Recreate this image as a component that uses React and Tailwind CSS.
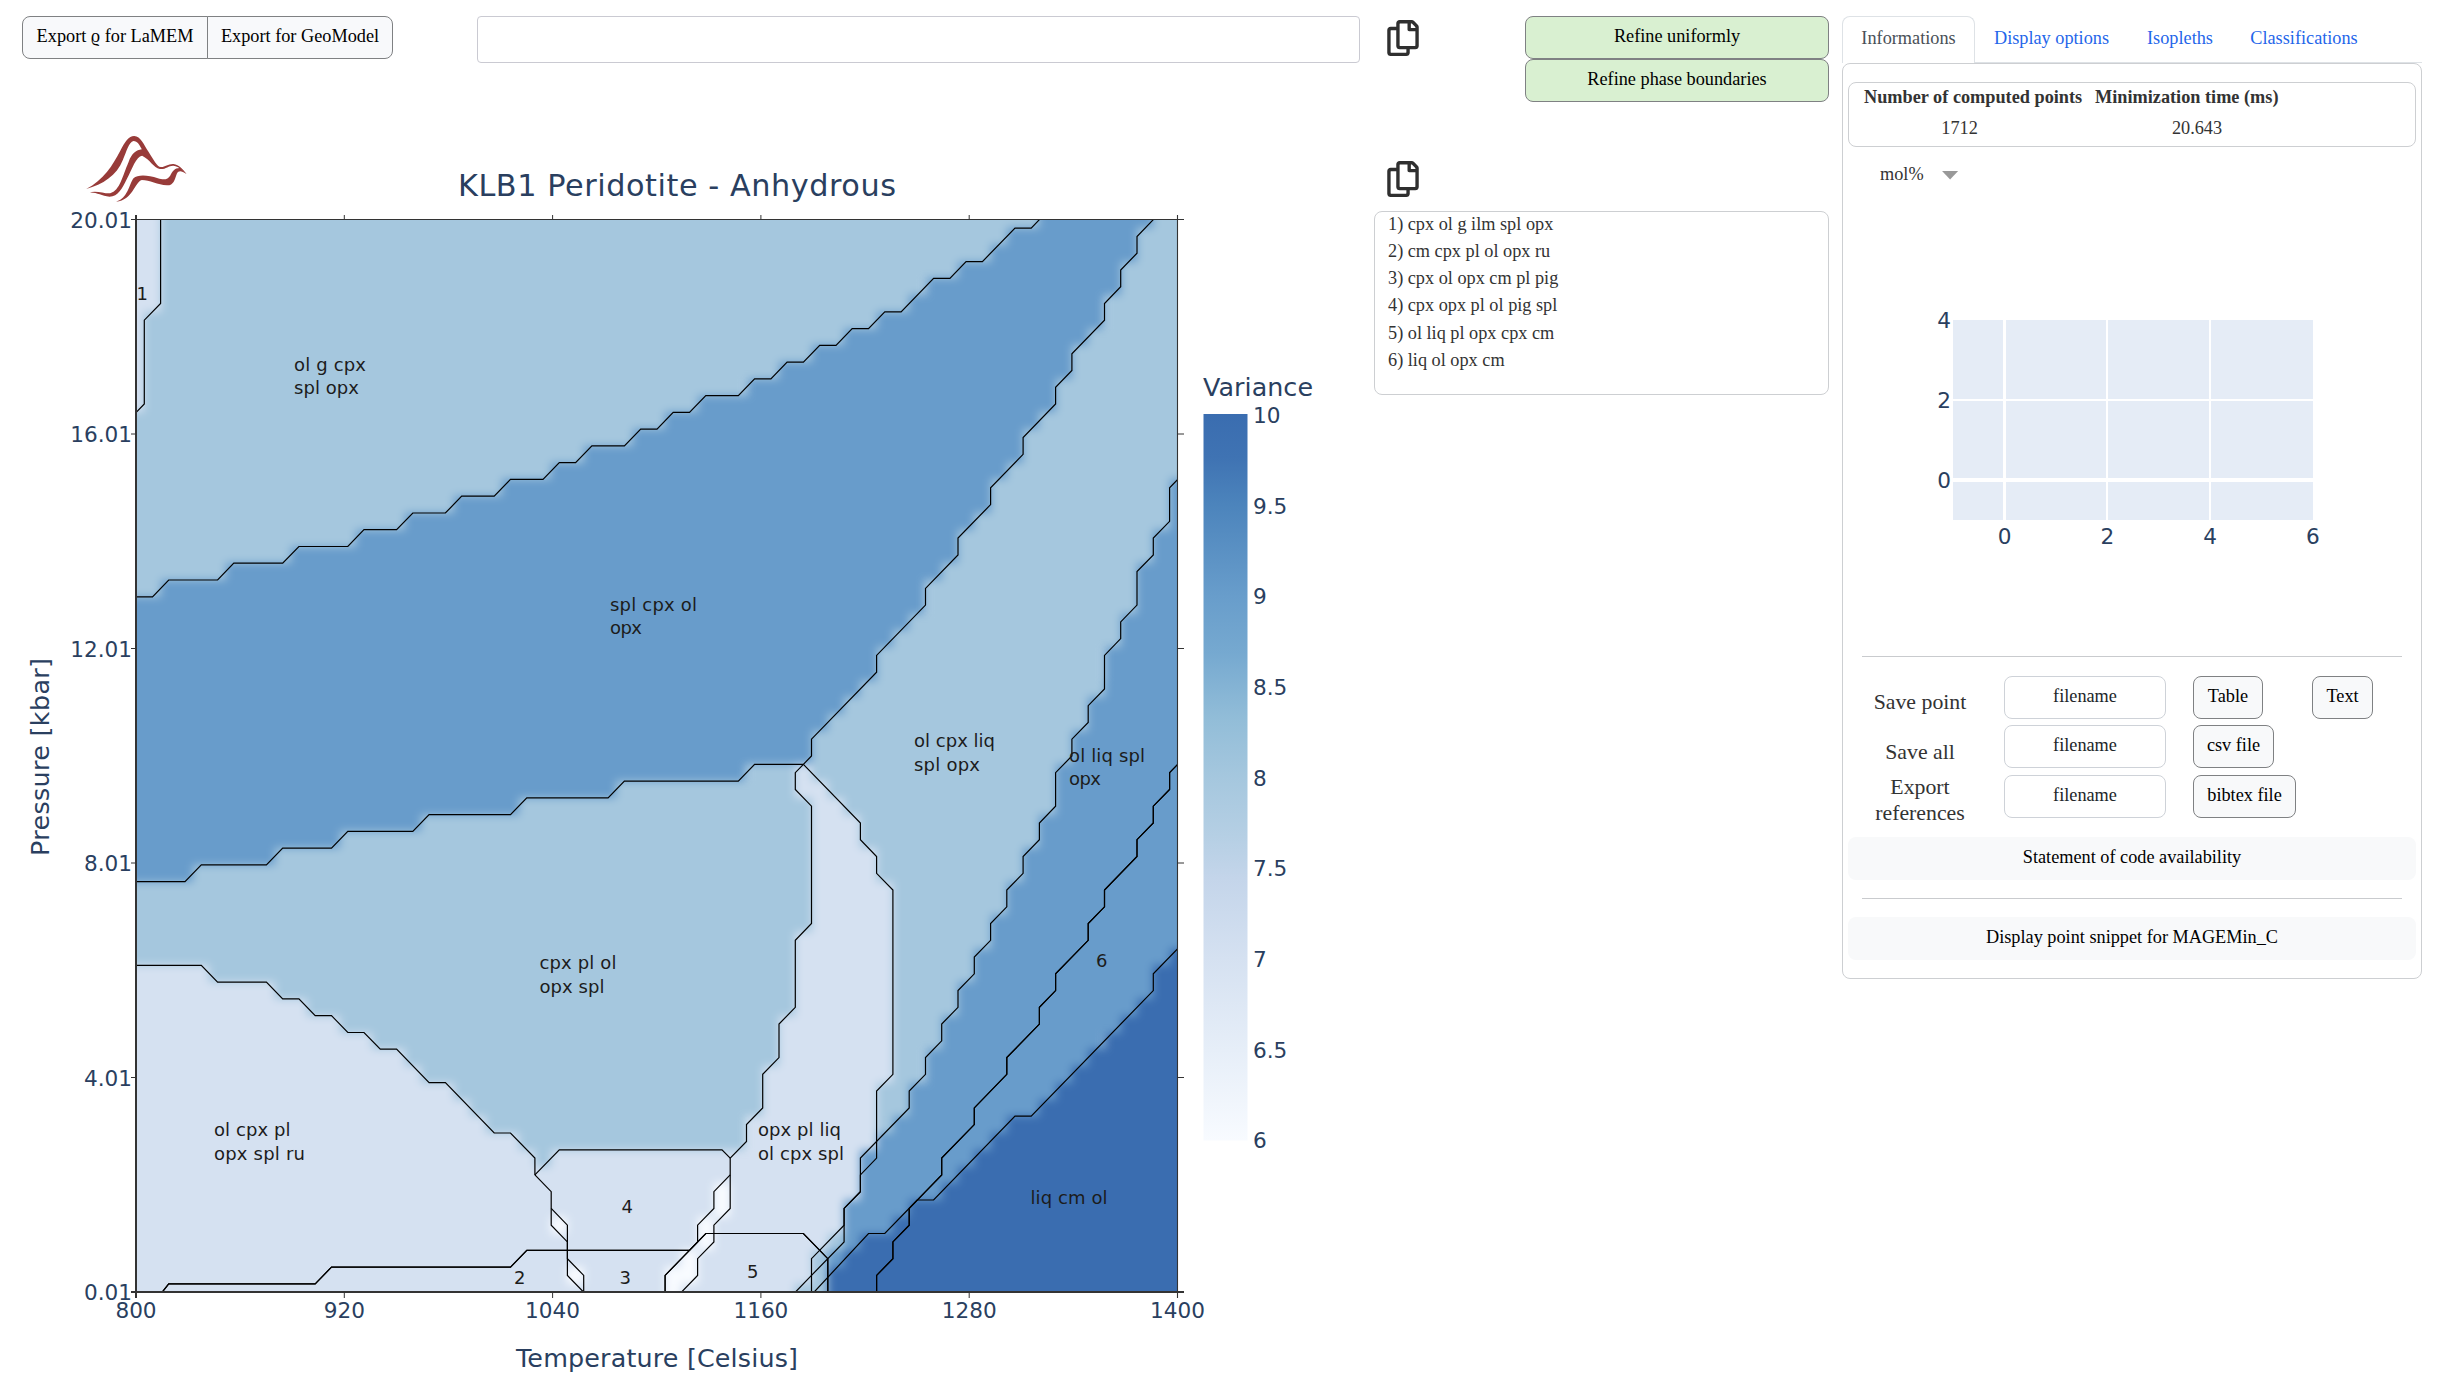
import React from "react";
import { FaRegCopy } from "react-icons/fa";

/* ---------- phase diagram geometry, on a 128 x 128 half-cell grid ---------- */
const X0 = 136.2;
const Y0 = 219.7;
const SX = 1041.5 / 128;
const SY = 1072.5 / 128;
const px = (u) => +(X0 + u * SX).toFixed(1);
const py = (v) => +(Y0 + v * SY).toFixed(1);

const cornerLeft = [[3, 0], [3, 10], [1, 12], [1, 22], [0, 23]];
const garnetOut = [
  [0, 45], [2, 45], [4, 43], [10, 43], [12, 41], [18, 41], [20, 39], [26, 39], [28, 37], [32, 37],
  [34, 35], [38, 35], [40, 33], [44, 33], [46, 31], [50, 31], [52, 29], [54, 29], [56, 27], [60, 27],
  [62, 25], [64, 25], [66, 23], [68, 23], [70, 21], [74, 21], [76, 19], [78, 19], [80, 17], [82, 17],
  [84, 15], [86, 15], [88, 13], [90, 13], [92, 11], [94, 11], [98, 7], [100, 7], [102, 5], [104, 5],
  [108, 1], [110, 1], [111, 0],
];
const solidusHigh = [
  [125, 0], [123, 2], [123, 4], [121, 6], [121, 8], [119, 10], [119, 12], [115, 16], [115, 18],
  [113, 20], [113, 22], [109, 26], [109, 28], [105, 32], [105, 34], [101, 38], [101, 40], [97, 44],
  [97, 46], [91, 52], [91, 54], [83, 62], [83, 64], [82, 65],
];
const solidusLow = [
  [82, 65], [81, 66], [81, 68], [83, 70], [83, 84], [81, 86], [81, 94], [79, 96], [79, 100], [77, 102],
  [77, 106], [75, 108], [75, 110], [73, 112],
];
const solidusTail = [[73, 112], [73, 118], [71, 120], [71, 122], [69, 124], [69, 126], [67, 128]];
const plagIn = [
  [0, 79], [6, 79], [8, 77], [16, 77], [18, 75], [24, 75], [26, 73], [34, 73], [36, 71], [46, 71],
  [48, 69], [58, 69], [60, 67], [74, 67], [76, 65], [82, 65],
];
const rutileIn = [
  [0, 89], [8, 89], [10, 91], [16, 91], [18, 93], [20, 93], [22, 95], [24, 95], [26, 97], [28, 97],
  [30, 99], [32, 99], [36, 103], [38, 103], [44, 109], [46, 109], [49, 112], [49, 114],
];
const rutileTail = [[49, 114], [51, 116], [51, 120], [53, 122], [53, 126], [55, 128]];
const pigeoniteLeft = [[51, 118], [53, 120], [53, 124], [55, 126], [55, 128]];
const pigeoniteTop = [[49, 114], [52, 111], [72, 111], [73, 112]];
const pigeoniteRight = [[73, 114], [71, 116], [71, 118], [69, 120], [69, 122], [68, 123]];
const field2 = [[3.2, 128], [4, 127], [22, 127], [24, 125], [46, 125], [48, 123], [68, 123]];
const field5 = [[65, 128], [65, 126], [70, 121], [82, 121], [85, 124], [85, 128]];
const plagOut = [
  [82, 65], [89, 72], [89, 74], [91, 76], [91, 78], [93, 80], [93, 102], [91, 104], [91, 112],
  [89, 114], [89, 116], [87, 118], [87, 122], [83, 126], [81, 128],
];
const cpxOut = [
  [128, 31], [127, 32], [127, 36], [125, 38], [125, 40], [123, 42], [123, 46], [121, 48], [121, 50],
  [119, 52], [119, 56], [117, 58], [117, 60], [115, 62], [115, 64], [113, 66], [113, 70], [111, 72],
  [111, 74], [109, 76], [109, 78], [107, 80], [107, 82], [105, 84], [105, 86], [103, 88], [103, 90],
  [101, 92], [101, 94], [99, 96], [99, 98], [97, 100], [97, 102], [95, 104], [95, 106], [89, 112],
  [89, 116], [87, 118], [87, 120], [83, 124], [83, 128],
];
const spinelOut = [
  [128, 65], [127, 66], [127, 68], [125, 70], [125, 72], [123, 74], [123, 76], [119, 80], [119, 82],
  [117, 84], [117, 86], [113, 90], [113, 92], [111, 94], [111, 96], [107, 100], [107, 102], [103, 106],
  [103, 108], [99, 112], [99, 114], [95, 118], [95, 120], [93, 122], [93, 124], [91, 126], [91, 128],
];
const opxOut = [[128, 87], [125, 90], [125, 92], [110, 107], [108, 107], [98, 117], [96, 117]];
const opxTail = [[96, 117], [92, 121], [90, 121], [83.3, 128]];

const rev = (a) => [...a].reverse();

/* painted in order, later fields win */
const fields = [
  [7, [[0, 0], ...cornerLeft]],
  [9, [...garnetOut, ...solidusHigh, ...rev(plagIn)]],
  [7, [...rutileIn, ...pigeoniteTop, ...rev(solidusLow), ...plagOut, [0, 128]]],
  [6, [[51, 118], [53, 120], [53, 122], [51, 120]]],
  [6, [[53, 124], [55, 126], [55, 128], [53, 126]]],
  [6, [...pigeoniteRight, [65, 126], [65, 128], ...rev(solidusTail)]],
  [9, [...cpxOut, [128, 128]]],
  [10, [...opxOut, ...opxTail, [128, 128]]],
  [8, [[83, 123], [85, 123], [85, 128], [83, 128]]],
  [8, [[85, 121], [87, 121], [87, 123], [85, 123]]],
].map(([k, pts]) => [
  k,
  pts.map(([a, b]) => [a === 0 ? -1 : a === 128 ? 129 : a, b === 0 ? -1 : b === 128 ? 129 : b]),
]);

const tone = { 6: "#f8fbff", 7: "#d5e1f1", 8: "#a5c7de", 9: "#689ccb", 10: "#3a6db0" };

function inside(pts, x, y) {
  let hit = false;
  for (let i = 0, j = pts.length - 1; i < pts.length; j = i++) {
    const [xi, yi] = pts[i];
    const [xj, yj] = pts[j];
    if (yi > y !== yj > y && x < ((xj - xi) * (y - yi)) / (yj - yi) + xi) hit = !hit;
  }
  return hit;
}

/* one run per stretch of equal variance in each row of cells */
const runs = [];
for (let v = 0; v <= 128; v += 2) {
  let last = null;
  for (let u = 0; u <= 128; u += 2) {
    let k = 8;
    for (const [val, pts] of fields) if (inside(pts, u, v)) k = val;
    if (last && last.k === k) last.u2 = u + 1;
    else {
      last = { k, u1: u === 0 ? -3 : u - 1, u2: u + 1, v };
      runs.push(last);
    }
  }
  last.u2 = 131;
}

const lines = [
  cornerLeft, garnetOut, solidusHigh, solidusLow, solidusTail, plagIn, rutileIn, rutileTail,
  pigeoniteLeft, pigeoniteTop, pigeoniteRight, field2, field5, plagOut, cpxOut, spinelOut, opxOut, opxTail,
];
const heavy = [field2, field5, spinelOut];
const toPoints = (a) => a.map(([u, v]) => `${px(u)},${py(v)}`).join(" ");

const labels = [
  [136.5, 299.5, "1"],
  [294, 371, "ol g cpx", 72], [294, 394, "spl opx", 65],
  [610, 611, "spl cpx ol", 87], [610, 634, "opx", 32],
  [914, 747, "ol cpx liq", 81], [914, 770.5, "spl opx", 66],
  [1069, 762, "ol liq spl", 76], [1069, 785, "opx", 32],
  [539.5, 969, "cpx pl ol", 77], [539.5, 992.5, "opx spl", 65],
  [214, 1135.5, "ol cpx pl", 76.5], [214, 1159.5, "opx spl ru", 91],
  [758, 1135.5, "opx pl liq", 83], [758, 1159.5, "ol cpx spl", 86],
  [1030.5, 1204.3, "liq cm ol", 77],
  [621.5, 1212.5, "4"], [514, 1283.5, "2"], [619.5, 1283.5, "3"], [747, 1277.5, "5"], [1096, 967, "6"],
];

const xTicks = ["800", "920", "1040", "1160", "1280", "1400"];
const yTicks = ["20.01", "16.01", "12.01", "8.01", "4.01", "0.01"];
const barTicks = ["10", "9.5", "9", "8.5", "8", "7.5", "7", "6.5", "6"];
const plotFont = "font-['DejaVu_Sans',Verdana,sans-serif]";

function Logo() {
  return (
    <g transform="translate(79.5 125) scale(0.3333)" fill="#983b39">
      <path d="M20 192C72 166 100 120 122 78C136 50 148 33 164 33C184 34 192 58 207 80C224 106 232 125 244 126C256 127 266 116 282 117C299 119 310 133 321 147C311 140 300 124 282 122C268 121 258 134 241 132C222 128 212 104 188 92C170 93 158 132 142 162C128 190 116 215 90 215C65 213 52 201 28 203C50 195 72 206 92 205C122 196 128 155 147 112C158 82 170 76 187 73C180 60 174 48 162 48C148 51 141 80 130 105C112 152 70 178 20 192Z" />
      <path d="M110 230C145 220 148 180 162 160C175 148 205 150 235 160C255 166 265 163 272 152C280 138 285 128 303 129L321 147C305 137 298 136 292 146C285 165 282 182 262 181C235 180 210 165 187 165C165 172 160 226 110 230Z" />
    </g>
  );
}

function PhaseDiagram() {
  return (
    <svg width="1360" height="1262" viewBox="0 120 1360 1262" className={`block ${plotFont}`}>
      <defs>
        <clipPath id="frame">
          <rect x="136" y="219.5" width="1041.5" height="1072.5" />
        </clipPath>
        <filter id="smooth" x="-2%" y="-2%" width="104%" height="104%" colorInterpolationFilters="sRGB">
          <feGaussianBlur stdDeviation="4.2" />
        </filter>
        <linearGradient id="bar" x1="0" y1="0" x2="0" y2="1">
          <stop offset="0" stopColor="#3a6db0" />
          <stop offset="0.06" stopColor="#3f73b3" />
          <stop offset="0.125" stopColor="#4c84bc" />
          <stop offset="0.25" stopColor="#689dcb" />
          <stop offset="0.33" stopColor="#76a9d0" />
          <stop offset="0.42" stopColor="#92bdd8" />
          <stop offset="0.5" stopColor="#a5c7de" />
          <stop offset="0.58" stopColor="#b5cfe4" />
          <stop offset="0.64" stopColor="#c4d5ea" />
          <stop offset="0.75" stopColor="#d5e1f1" />
          <stop offset="0.875" stopColor="#e6eef8" />
          <stop offset="1" stopColor="#f8fbff" />
        </linearGradient>
      </defs>

      <Logo />
      <text x="458" y="195.5" fontSize="30.3" textLength="438" fill="#2a3f5f">KLB1 Peridotite - Anhydrous</text>

      <g clipPath="url(#frame)">
        <g filter="url(#smooth)" shapeRendering="crispEdges">
          {runs.map((r, i) => (
            <rect
              key={i}
              x={px(r.u1)}
              y={py(r.v === 0 ? -3 : r.v - 1)}
              width={(r.u2 - r.u1) * SX}
              height={(r.v === 0 || r.v === 128 ? 4 : 2) * SY + 0.5}
              fill={tone[r.k]}
            />
          ))}
        </g>
        <g fill="none" stroke="#000" strokeWidth="1.2">
          {lines.map((l, i) => <polyline key={i} points={toPoints(l)} />)}
          {heavy.map((l, i) => <polyline key={i} points={toPoints(l)} />)}
        </g>
      </g>

      <g stroke="#333">
        <path d="M131 219.5H1184M1177.5 215V1298" strokeWidth="1.1" />
        <path d="M136 215V1298" strokeWidth="2" />
        <path d="M131 1292H1184" strokeWidth="2" />
        {xTicks.slice(1, 5).map((t, i) => (
          <path key={t} d={`M${136 + 208.3 * (i + 1)} 215V219.5M${136 + 208.3 * (i + 1)} 1292V1298`} />
        ))}
        {yTicks.slice(1, 5).map((t, i) => (
          <path key={t} d={`M131 ${219.5 + 214.5 * (i + 1)}H136M1177.5 ${219.5 + 214.5 * (i + 1)}H1184`} />
        ))}
      </g>

      <g fill="#1c1c1c" fontSize="18">
        {labels.map(([x, y, t, w], i) => (
          <text key={i} x={x} y={y} textLength={w}>{t}</text>
        ))}
      </g>

      <g fill="#2a3f5f" fontSize="21.6">
        {xTicks.map((t, i) => (
          <text key={t} x={136 + 208.3 * i} y="1318" textAnchor="middle">{t}</text>
        ))}
        {yTicks.map((t, i) => (
          <text key={t} x="132" y={227.5 + 214.5 * i} textAnchor="end">{t}</text>
        ))}
        {barTicks.map((t, i) => (
          <text key={t} x="1253" y={423 + 90.65 * i}>{t}</text>
        ))}
      </g>
      <g fill="#2a3f5f" fontSize="25.4">
        <text x="516" y="1367" textLength="282">Temperature [Celsius]</text>
        <text transform="translate(48.5 856) rotate(-90)" textLength="198">Pressure [kbar]</text>
        <text x="1203" y="396" textLength="110">Variance</text>
      </g>
      <rect x="1203.5" y="414" width="44" height="726.5" fill="url(#bar)" />
    </svg>
  );
}

function CompositionPlot() {
  return (
    <svg width="567" height="460" viewBox="1848 195 567 460" className={`block ${plotFont}`}>
      <rect x="1953" y="320" width="360" height="200" fill="#e5ecf6" />
      <path d="M2107 320V520M2210 320V520M1953 400H2313" stroke="#fff" strokeWidth="2" />
      <path d="M2004.5 320V520" stroke="#fff" strokeWidth="3" />
      <path d="M1953 480H2313" stroke="#fff" strokeWidth="4" />
      <g fill="#2a3f5f" fontSize="21.6">
        {["4", "2", "0"].map((t, i) => (
          <text key={t} x="1951" y={327.7 + 80 * i} textAnchor="end">{t}</text>
        ))}
        {["0", "2", "4", "6"].map((t, i) => (
          <text key={t} x={2004.5 + 102.8 * i} y="543.5" textAnchor="middle">{t}</text>
        ))}
      </g>
    </svg>
  );
}

const Button = ({ className = "", children }) => (
  <button className={`box-border h-[43px] whitespace-nowrap border border-[#7f8183] pb-[1px] text-black ${className}`}>
    {children}
  </button>
);

const SaveRow = ({ label, className = "", children }) => (
  <div className="flex h-[43px]">
    <div className={`ml-px w-[142px] shrink-0 text-center text-[21.8px] leading-[26px] text-[#333] ${className}`}>{label}</div>
    <div className="ml-[13px] h-[43px] w-[162px] shrink-0 rounded-lg border border-[#ced2d8] text-center leading-[39px] text-[#212529]">
      filename
    </div>
    <div className="ml-[27px] flex">{children}</div>
  </div>
);

const legend = [
  "1) cpx ol g ilm spl opx", "2) cm cpx pl ol opx ru", "3) cpx ol opx cm pl pig",
  "4) cpx opx pl ol pig spl", "5) ol liq pl opx cpx cm", "6) liq ol opx cm",
];

export default function App() {
  return (
    <div className="flex h-[1382px] w-[2444px] overflow-hidden bg-white font-['Liberation_Serif','Times_New_Roman',serif] text-[18.25px] text-[#333]">
      <main className="w-[1374px] shrink-0">
        <div className="flex h-[120px] items-start pl-[22px] pt-[16px]">
          <Button className="w-[186px] rounded-l-lg bg-[#f8f9fb]">Export ϱ for LaMEM</Button>
          <Button className="-ml-px w-[186px] rounded-r-lg bg-[#f8f9fb]">Export for GeoModel</Button>
          <div className="ml-[84px] h-[47px] w-[883px] rounded border border-[#cacad2]" />
        </div>
        <PhaseDiagram />
      </main>

      <section className="w-[455px] shrink-0 pt-[16px]">
        <div className="flex h-[145px] items-start">
          <FaRegCopy className="ml-[13px] mt-[4px] h-[36px] w-[32px] text-[#2f2f2f]" />
          <div className="ml-auto flex w-[304px] flex-col">
            <Button className="rounded-lg bg-[#d9f0d1]">Refine uniformly</Button>
            <Button className="rounded-lg bg-[#d9f0d1]">Refine phase boundaries</Button>
          </div>
        </div>
        <FaRegCopy className="ml-[13px] h-[36px] w-[32px] text-[#2f2f2f]" />
        <ul className="mt-[14px] h-[184px] rounded-lg border border-[#cdcfd2] pl-[13px] leading-[27.3px]">
          {legend.map((t) => <li key={t} className="relative -top-[1.5px]">{t}</li>)}
        </ul>
      </section>

      <aside className="ml-[13px] mt-[16px] w-[580px] shrink-0">
        <nav className="flex h-[47px] border-b border-[#dee2e6] leading-[44px] text-[#1f66ea]">
          <div className="-mb-px w-[133px] rounded-t-lg border border-b-0 border-[#dee2e6] bg-white text-center leading-[43px] text-[#495057]">Informations</div>
          <div className="w-[153px] text-center">Display options</div>
          <div className="w-[104px] text-center">Isopleths</div>
          <div className="w-[144px] text-center">Classifications</div>
        </nav>
        <div className="h-[916px] rounded-lg border border-[#cdcfd2] px-[5px] pt-[18px]">
          <div className="h-[65px] rounded-lg border border-[#cdcfd2] px-[15px]">
            <div className="flex whitespace-nowrap pt-px font-bold leading-[27px]">
              <span className="w-[218px]">Number of computed points</span>
              <span className="ml-[13px]">Minimization time (ms)</span>
            </div>
            <div className="flex pt-[4px] leading-[27px]">
              <span className="w-[191px] text-center">1712</span>
              <span className="ml-[45px] w-[194px] text-center">20.643</span>
            </div>
          </div>
          <div className="flex h-[48px] items-center pl-[32px] pt-[8px]">
            mol%
            <span className="ml-[18px] h-[9px] w-[17px] bg-[#999] [clip-path:polygon(0_0,100%_0,50%_100%)]" />
          </div>
          <CompositionPlot />
          <hr className="mx-[14px] mt-px border-[#c9cbce]" />

          <div className="mt-[19px] flex flex-col">
            <SaveRow label="Save point" className="pt-[13px]">
              <Button className="w-[70px] rounded-lg bg-[#f8f9fa]">Table</Button>
              <Button className="ml-[49px] w-[61px] rounded-lg bg-[#f8f9fa]">Text</Button>
            </SaveRow>
            <div className="h-[6px]" />
            <SaveRow label="Save all" className="pt-[14px]">
              <Button className="w-[81px] rounded-lg bg-[#f8f9fa]">csv file</Button>
            </SaveRow>
            <div className="h-[7px]" />
            <SaveRow label={<span className="relative -top-px">Export<br />references</span>}>
              <Button className="w-[103px] rounded-lg bg-[#f8f9fa]">bibtex file</Button>
            </SaveRow>
          </div>

          <div className="mt-[19px] h-[43px] rounded-lg bg-[#f8f9fa] text-center leading-[41px] text-black">
            Statement of code availability
          </div>
          <hr className="mx-[14px] mt-[18px] border-[#c9cbce]" />
          <div className="mt-[18px] h-[43px] rounded-lg bg-[#f8f9fa] text-center leading-[41px] text-black">
            Display point snippet for MAGEMin_C
          </div>
        </div>
      </aside>
    </div>
  );
}
